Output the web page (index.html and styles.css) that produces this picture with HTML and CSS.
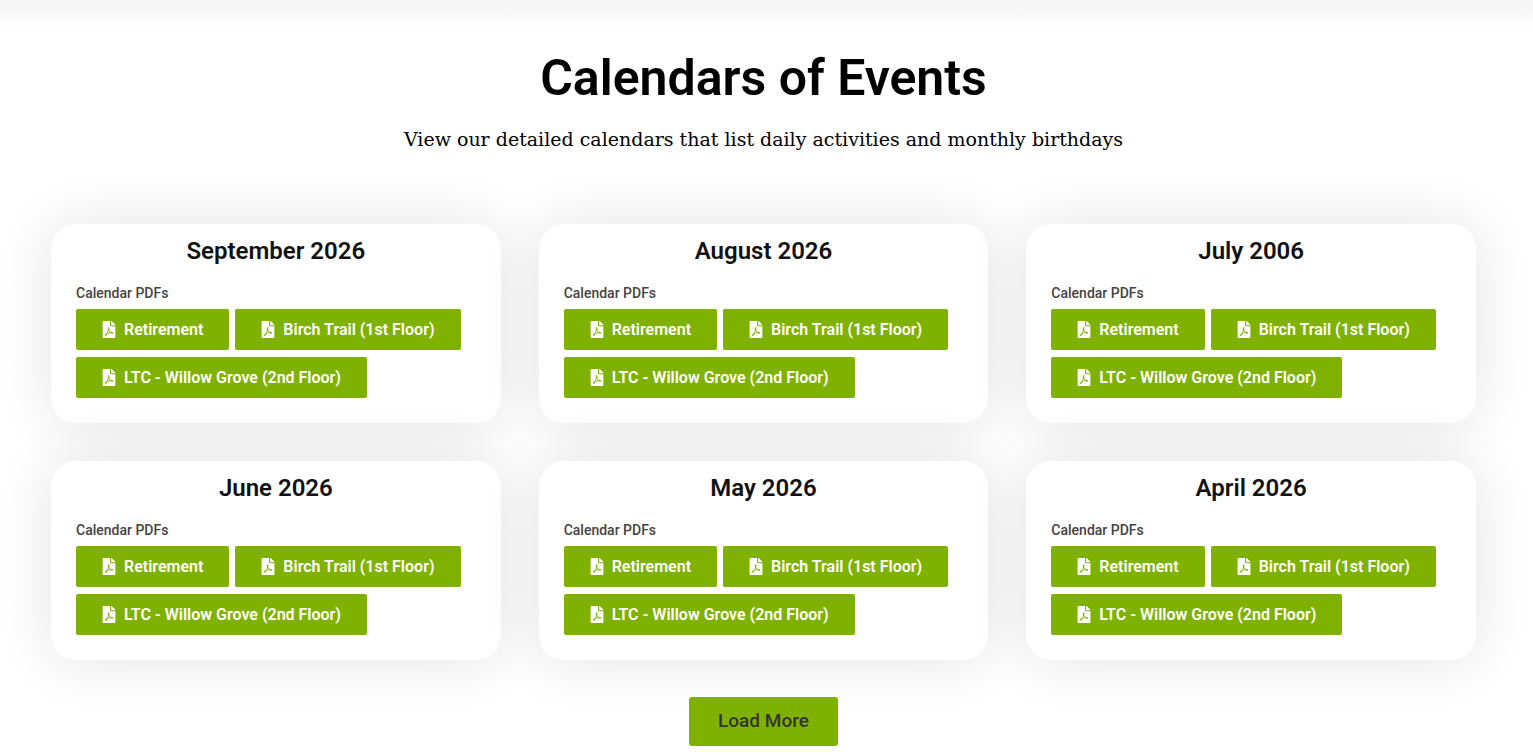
FILE: index.html
```html
<!DOCTYPE html>
<html lang="en">
<head>
<meta charset="UTF-8" />
<meta name="viewport" content="width=device-width, initial-scale=1" />
<title>Calendars of Events</title>
<link rel="stylesheet" href="styles.css">
</head>
<body>

<!-- PDF icon shared by all the download buttons -->
<svg class="sprite" aria-hidden="true">
  <symbol id="icon-pdf" viewBox="0 0 384 512">
    <path d="M181.900 256.100c-5-16-4.900-46.900-2-46.900 8.400 0 7.600 36.900 2 46.900zm-1.700 47.200c-7.700 20.200-17.300 43.300-28.400 62.700 18.300-7 39-17.200 62.900-21.900-12.700-9.600-24.900-23.400-34.500-40.800zM86.100 428.100c0 .8 13.200-5.400 34.900-40.200-6.700 6.300-29.100 24.500-34.900 40.200zM248 160h136v328c0 13.300-10.700 24-24 24H24c-13.300 0-24-10.700-24-24V24C0 10.700 10.700 0 24 0h200v136c0 13.200 10.800 24 24 24zm-8 171.800c-20-12.200-33.300-29-42.700-53.800 4.500-18.500 11.600-46.600 6.200-64.200-4.700-29.400-42.400-26.500-47.800-6.800-5 18.300-.4 44.100 8.100 77-11.600 27.600-28.700 64.600-40.800 85.800-.1 0-.1.100-.2.100-27.100 13.900-73.600 44.500-54.500 68 5.600 6.900 16 10 21.500 10 17.900 0 35.700-18 61.100-61.800 25.800-8.500 54.100-19.100 79-23.200 21.700 11.800 47.100 19.500 64 19.500 29.200 0 31.200-32 19.700-43.400-13.900-13.600-54.300-9.700-73.600-7.200zM377 105L279 7c-4.500-4.500-10.600-7-17-7h-6v128h128v-6.100c0-6.300-2.500-12.400-7-16.900zm-74.100 255.300c4.100-2.700-2.500-11.900-42.800-9 37.100 15.800 42.800 9 42.800 9z"/>
  </symbol>
</svg>

<main class="events">
  <header class="events-header">
    <h1>Calendars of Events</h1>
    <p>View our detailed calendars that list daily activities and monthly birthdays</p>
  </header>

  <div class="calendar-grid">
    <article class="card">
      <h2>September 2026</h2>
      <p class="label">Calendar PDFs</p>
      <div class="pdf-links">
        <a class="pdf-btn" href="#"><svg class="icon"><use href="#icon-pdf" /></svg>Retirement</a>
        <a class="pdf-btn" href="#"><svg class="icon"><use href="#icon-pdf" /></svg>Birch Trail (1st Floor)</a>
        <a class="pdf-btn" href="#"><svg class="icon"><use href="#icon-pdf" /></svg>LTC - Willow Grove (2nd Floor)</a>
      </div>
    </article>

    <article class="card">
      <h2>August 2026</h2>
      <p class="label">Calendar PDFs</p>
      <div class="pdf-links">
        <a class="pdf-btn" href="#"><svg class="icon"><use href="#icon-pdf" /></svg>Retirement</a>
        <a class="pdf-btn" href="#"><svg class="icon"><use href="#icon-pdf" /></svg>Birch Trail (1st Floor)</a>
        <a class="pdf-btn" href="#"><svg class="icon"><use href="#icon-pdf" /></svg>LTC - Willow Grove (2nd Floor)</a>
      </div>
    </article>

    <article class="card">
      <h2>July 2006</h2>
      <p class="label">Calendar PDFs</p>
      <div class="pdf-links">
        <a class="pdf-btn" href="#"><svg class="icon"><use href="#icon-pdf" /></svg>Retirement</a>
        <a class="pdf-btn" href="#"><svg class="icon"><use href="#icon-pdf" /></svg>Birch Trail (1st Floor)</a>
        <a class="pdf-btn" href="#"><svg class="icon"><use href="#icon-pdf" /></svg>LTC - Willow Grove (2nd Floor)</a>
      </div>
    </article>

    <article class="card">
      <h2>June 2026</h2>
      <p class="label">Calendar PDFs</p>
      <div class="pdf-links">
        <a class="pdf-btn" href="#"><svg class="icon"><use href="#icon-pdf" /></svg>Retirement</a>
        <a class="pdf-btn" href="#"><svg class="icon"><use href="#icon-pdf" /></svg>Birch Trail (1st Floor)</a>
        <a class="pdf-btn" href="#"><svg class="icon"><use href="#icon-pdf" /></svg>LTC - Willow Grove (2nd Floor)</a>
      </div>
    </article>

    <article class="card">
      <h2>May 2026</h2>
      <p class="label">Calendar PDFs</p>
      <div class="pdf-links">
        <a class="pdf-btn" href="#"><svg class="icon"><use href="#icon-pdf" /></svg>Retirement</a>
        <a class="pdf-btn" href="#"><svg class="icon"><use href="#icon-pdf" /></svg>Birch Trail (1st Floor)</a>
        <a class="pdf-btn" href="#"><svg class="icon"><use href="#icon-pdf" /></svg>LTC - Willow Grove (2nd Floor)</a>
      </div>
    </article>

    <article class="card">
      <h2>April 2026</h2>
      <p class="label">Calendar PDFs</p>
      <div class="pdf-links">
        <a class="pdf-btn" href="#"><svg class="icon"><use href="#icon-pdf" /></svg>Retirement</a>
        <a class="pdf-btn" href="#"><svg class="icon"><use href="#icon-pdf" /></svg>Birch Trail (1st Floor)</a>
        <a class="pdf-btn" href="#"><svg class="icon"><use href="#icon-pdf" /></svg>LTC - Willow Grove (2nd Floor)</a>
      </div>
    </article>
  </div>

  <button type="button" class="load-more">Load More</button>
</main>

</body>
</html>
```

FILE: styles.css
```css
:root {
  --green: #7fb200;
  --white: #fff;
}
* {
  box-sizing: border-box;
}
body {
  margin: 0;
  font-family: Roboto, sans-serif;
  background-color: var(--white);
  color: #000;
}
h1, h2, p {
  margin: 0;
}
.sprite {
  display: none;
}

.events {
  display: flex;
  flex-direction: column;
  align-items: center;
  padding: 48px 57px 9px 51px;
  background: linear-gradient(#f4f4f4, #fff 30px);
}
.events-header {
  text-align: center;
  margin-bottom: 70px;
}
.events-header h1 {
  font-size: 50px;
  font-weight: 600;
  line-height: 60px;
}
.events-header p {
  margin-top: 16px;
  font-family: "Roboto Slab", "DejaVu Serif", serif;
  font-size: 19px;
  line-height: 30px;
}

/* Calendar cards */
.calendar-grid {
  display: grid;
  grid-template-columns: repeat(3, 1fr);
  gap: 38px;
  width: 100%;
}
.card {
  padding: 12px 25px 25px;
  background-color: var(--white);
  border-radius: 25px;
  box-shadow: 0 0 60px rgba(0,0,0,0.11);
}
.card h2 {
  font-size: 24px;
  font-weight: 600;
  line-height: 30px;
  color: #111;
  text-align: center;
}
.label {
  margin: 17px 0 6px;
  font-size: 14px;
  font-weight: 500;
  line-height: 20px;
  color: #444;
}
.pdf-links {
  display: flex;
  flex-wrap: wrap;
  gap: 7px 6px;
}
.pdf-btn {
  display: flex;
  align-items: center;
  gap: 8px;
  height: 41px;
  padding: 0 26px;
  background-color: var(--green);
  border-radius: 2px;
  color: var(--white);
  font-size: 16px;
  font-weight: 600;
  text-decoration: none;
}
.icon {
  width: 14px;
  height: 17px;
  fill: currentColor;
}

.load-more {
  margin-top: 37px;
  padding: 0 29px 2px;
  height: 49px;
  border: none;
  border-radius: 3px;
  background-color: var(--green);
  color: #333;
  font-family: inherit;
  font-size: 19px;
  font-weight: 500;
  cursor: pointer;
}
.pdf-btn:hover,
.load-more:hover {
  background-color: #6f9c00;
}

/* Responsive */
@media (max-width: 1300px) {
  .calendar-grid {
    grid-template-columns: repeat(2, 1fr);
  }
}
@media (max-width: 800px) {
  .events {
    padding: 30px 20px;
  }
  .calendar-grid {
    grid-template-columns: 1fr;
  }
}
```
